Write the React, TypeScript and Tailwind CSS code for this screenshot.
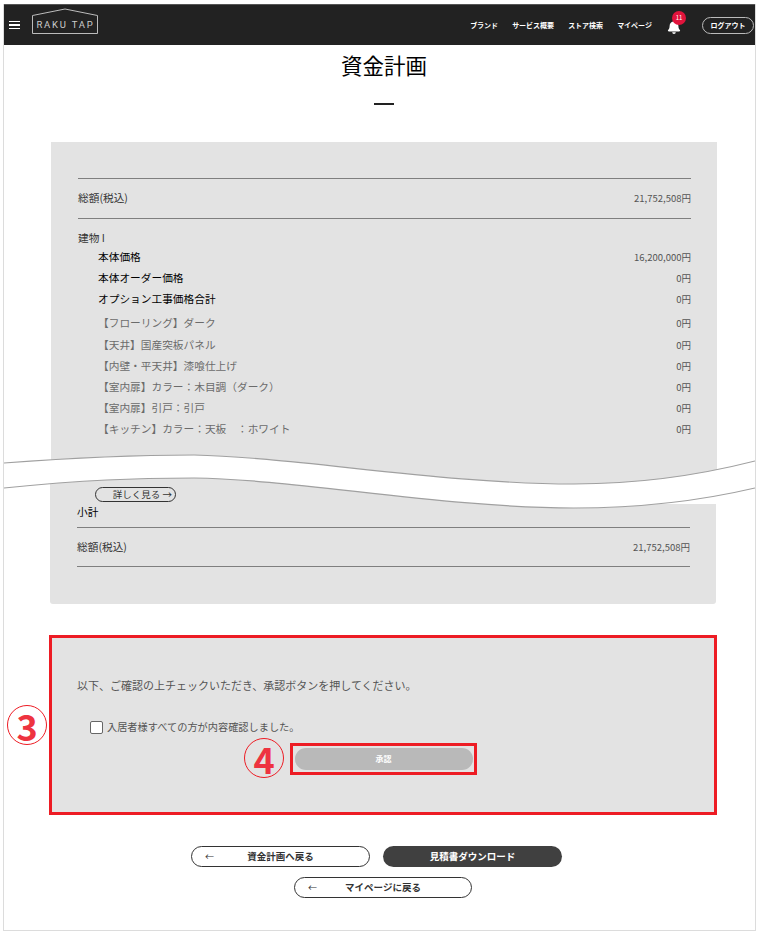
import { FaBell } from "react-icons/fa";

const navItems = ["ブランド", "サービス概要", "ストア検索", "マイページ"];

const options = [
	"【フローリング】ダーク",
	"【天井】国産突板パネル",
	"【内壁・平天井】漆喰仕上げ",
	"【室内扉】カラー：木目調（ダーク）",
	"【室内扉】引戸：引戸",
	"【キッチン】カラー：天板　：ホワイト",
];

function Header() {
	return (
		<header className="flex h-[41px] items-center border-t border-[#555] bg-[#222] pl-[5px] pr-[1px] text-white">
			<div className="flex w-[11px] flex-col gap-[2px]">
				<span className="h-[1.5px] bg-white" />
				<span className="h-[1.5px] bg-white" />
				<span className="h-[1.5px] bg-white" />
			</div>
			<div className="relative ml-[11px] mb-[8px] flex h-[27px] w-[68px] items-end justify-center pb-[3px] pl-[1px]">
				<svg className="absolute inset-0 h-[27px] w-[68px]" viewBox="0 0 68 27" fill="none" role="img">
					<title>RAKU TAPの枠</title>
					<path d="M1.5 25.5V7.5L34 1l32.5 6.5v18z" stroke="#bbb" strokeWidth="1" />
				</svg>
				<span className="relative font-['Roboto',sans-serif] text-[9.5px] leading-[14px] tracking-[1.8px] text-[#ccc]">RAKU TAP</span>
			</div>
			<nav className="ml-auto flex gap-[14px] text-[7px] font-bold">
				{navItems.map((item) => (
					<span key={item}>{item}</span>
				))}
			</nav>
			<div className="relative ml-[15px] mt-[3px] mr-[21px] text-[14px]">
				<FaBell />
				<span className="absolute -top-[9px] left-[5px] flex h-[14px] w-[14px] items-center justify-center rounded-full bg-[#e0143c] text-[6px] text-white">
					11
				</span>
			</div>
			<button type="button" className="flex h-[17px] w-[52px] items-center justify-center rounded-full border border-[#bbb] text-[7px] font-bold">
				ログアウト
			</button>
		</header>
	);
}

function Row({ label, value, className }: { label: string; value: string; className: string }) {
	return (
		<div className={`flex h-[21px] items-center justify-between ${className}`}>
			<span>{label}</span>
			<span className="text-[9.5px] text-[#555]">{value}</span>
		</div>
	);
}

function Wave() {
	return (
		<svg className="absolute left-0 top-[444px] h-[70px] w-[751px]" viewBox="0 0 751 70" role="img">
			<title>省略</title>
			<path d="M0 15C80 9 130 7 190 7C290 9 440 36 570 36C640 36 700 26 751 13V40C700 52 640 60 570 60C440 60 290 31 190 30C130 30 80 32 0 40Z" fill="#fff" />
			<rect x="650" y="40" width="70" height="16" fill="#fff" />
			<path d="M0 15C80 9 130 7 190 7C290 9 440 36 570 36C640 36 700 26 751 13" fill="none" stroke="#a0a0a0" strokeWidth="1.2" />
			<path d="M0 40C80 32 130 30 190 30C290 31 440 60 570 60C640 60 700 52 751 40" fill="none" stroke="#a0a0a0" strokeWidth="1.2" />
		</svg>
	);
}

function OutlineButton({ label, width }: { label: string; width: string }) {
	return (
		<button type="button" className={`relative flex h-[21px] items-center justify-center rounded-full border border-[#333] bg-white text-[9.5px] font-bold text-[#333] ${width}`}>
			<span className="absolute left-[13px] text-[9px] font-normal">←</span>
			{label}
		</button>
	);
}

export default function App() {
	return (
		<div className="bg-white pt-[4px] pl-[3px] pr-[2px] pb-[3px] font-['Noto_Sans_CJK_JP','Liberation_Sans',sans-serif]">
			<div className="relative h-[927px] border-x border-b border-[#dcdcdc]">
				<Header />

				<div className="pl-[9px]">
					<h1 className="mt-[4px] text-center text-[21.5px] leading-[32px] text-black">資金計画</h1>
					<div className="mx-auto mt-[22px] h-[2px] w-[20px] bg-[#222]" />
				</div>

				<section className="ml-[47px] mt-[37px] h-[329px] w-[666px] bg-[#e3e3e3] pl-[27px] pr-[26px] pt-[36px] text-[10.7px] text-[#333]">
					<div className="border-y border-[#7f7f7f]">
						<div className="flex h-[39px] items-center justify-between">
							<span>総額(税込)</span>
							<span className="text-[9.5px] text-[#555]">21,752,508円</span>
						</div>
					</div>
					<div className="mt-[8px] h-[21px] leading-[21px]">建物 I</div>
					<Row label="本体価格" value="16,200,000円" className="-mt-[1px] pl-[20px] text-black" />
					<Row label="本体オーダー価格" value="0円" className="pl-[20px] text-black" />
					<Row label="オプション工事価格合計" value="0円" className="pl-[20px] text-black" />
					<div className="mt-[3px] flex flex-col gap-[0.2px]">
						{options.map((option) => (
							<Row key={option} label={option} value="0円" className="pl-[20px] text-[#6b6b6b]" />
						))}
					</div>
				</section>

				<section className="ml-[46px] h-[133px] w-[666px] rounded-b-[3px] bg-[#e3e3e3] pl-[27px] pr-[26px] pt-[32px] text-[10.7px] text-[#333]">
					<div className="h-[18px] leading-[18px] text-black">小計</div>
					<div className="mt-[6px] border-y border-[#7f7f7f]">
						<div className="flex h-[38px] items-center justify-between">
							<span>総額(税込)</span>
							<span className="text-[9.5px] text-[#555]">21,752,508円</span>
						</div>
					</div>
				</section>

				<Wave />
				<button type="button" className="absolute left-[91px] top-[483px] flex h-[15px] w-[81px] items-center justify-end rounded-full border border-[#333] bg-[#e3e3e3] pr-[3px] text-[9.5px] text-[#333]">
					詳しく見る →
				</button>

				<section className="ml-[45px] mt-[31px] h-[180px] w-[668px] border-[3px] border-[#ed1c24] bg-[#e3e3e3] pl-[25px] text-[#555]">
					<p className="mt-[39px] text-[11px] leading-[16px]">以下、ご確認の上チェックいただき、承認ボタンを押してください。</p>
					<label className="ml-[13px] mt-[27px] flex items-center gap-[4px] text-[10.2px] leading-[14px]">
						<span className="h-[13px] w-[13px] rounded-[2px] border border-[#666] bg-white" />
						入居者様すべての方が内容確認しました。
					</label>
					<div className="ml-[213px] mt-[9px] flex h-[32px] w-[187px] items-center justify-center border-[3px] border-[#ed1c24]">
						<button type="button" className="flex h-[22px] w-[178px] items-center justify-center rounded-full bg-[#b9b9b9] text-[8px] font-bold text-white">
							承認
						</button>
					</div>
				</section>

				<div className="absolute left-[3px] top-[701px] flex h-[40px] w-[40px] items-center justify-center rounded-full border border-[#ed1c24] bg-white text-[36px] font-bold leading-none text-[#ee3340]">
					3
				</div>
				<div className="absolute left-[240px] top-[734px] flex h-[40px] w-[40px] items-center justify-center rounded-full border border-[#ed1c24] bg-[#e3e3e3] text-[36px] font-bold leading-none text-[#ee3340]">
					4
				</div>

				<div className="mt-[31px] flex justify-center gap-[13px] pr-[6px]">
					<OutlineButton label="資金計画へ戻る" width="w-[179px]" />
					<button type="button" className="flex h-[21px] w-[179px] items-center justify-center rounded-full bg-[#404040] text-[9.5px] font-bold text-white">
						見積書ダウンロード
					</button>
				</div>
				<div className="mt-[10px] flex justify-center pl-[7px]">
					<OutlineButton label="マイページに戻る" width="w-[178px]" />
				</div>
			</div>
		</div>
	);
}
